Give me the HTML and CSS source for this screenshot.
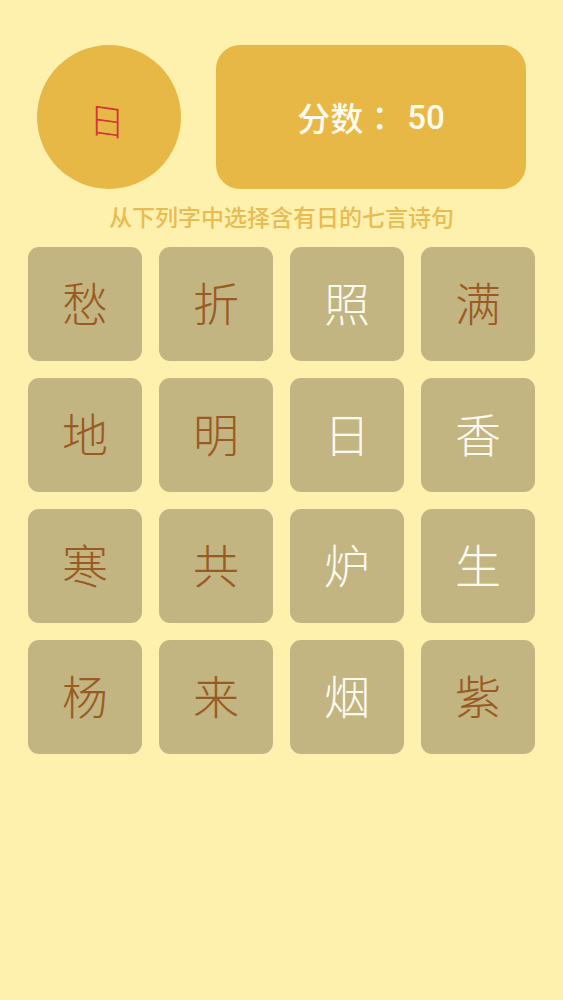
FILE: index.html
```html
<!DOCTYPE html>
<html lang="zh-CN">
<head>
    <meta charset="UTF-8">
    <meta name="viewport" content="width=device-width, initial-scale=1.0">
    <title>七言诗句</title>
    <link rel="stylesheet" href="styles.css">
</head>
<body>

<div class="container">
    <div class="topo">
        <div class="circulo"><span class="letra">日</span></div>
        <div class="placar"><span class="rotulo">分数</span><span class="dois-pontos">：</span>50</div>
    </div>
    <p class="dica">从下列字中选择含有日的七言诗句</p>
    <div class="grade">
        <div class="peca">愁</div>
        <div class="peca">折</div>
        <div class="peca branca">照</div>
        <div class="peca">满</div>
        <div class="peca">地</div>
        <div class="peca">明</div>
        <div class="peca branca">日</div>
        <div class="peca branca">香</div>
        <div class="peca">寒</div>
        <div class="peca">共</div>
        <div class="peca branca">炉</div>
        <div class="peca branca">生</div>
        <div class="peca">杨</div>
        <div class="peca">来</div>
        <div class="peca branca">烟</div>
        <div class="peca">紫</div>
    </div>
</div>

</body>
</html>
```

FILE: styles.css
```css
body {
    font-family: "Noto Sans CJK SC", "Noto Sans", sans-serif;
    margin: 0;
    background-color: #fef1ae;
    min-height: 100vh;
}

.container {
    display: flex;
    flex-direction: column;
    padding-top: 45px;
}

.topo {
    display: flex;
    gap: 35px;
    padding-left: 37px;
}

.circulo {
    width: 144px;
    height: 144px;
    border-radius: 50%;
    background-color: #e8b846;
    display: flex;
    justify-content: center;
    align-items: center;
}

.letra {
    color: #d3363a;
    font-size: 36px;
    font-weight: 300;
    transform: skewY(8deg) translate(-2px, 2px);
}

.placar {
    width: 310px;
    height: 144px;
    border-radius: 24px;
    background-color: #e8b846;
    color: #fffbf0;
    font-family: Roboto, "Noto Sans CJK SC", sans-serif;
    font-size: 33px;
    font-weight: 500;
    display: flex;
    justify-content: center;
    align-items: center;
}

.rotulo {
    font-family: "Noto Sans CJK SC", sans-serif;
}

.dois-pontos {
    font-family: "Noto Sans CJK TC", sans-serif;
    margin-right: 11px;
}

.dica {
    margin: 12px 0 0;
    text-align: center;
    font-size: 23px;
    font-weight: 500;
    line-height: 30px;
    color: #e9bb52;
}

.grade {
    display: grid;
    grid-template-columns: repeat(4, 114px);
    grid-auto-rows: 114px;
    gap: 17px;
    margin: 16px 0 0 28px;
}

.peca {
    background-color: #c2b582;
    border-radius: 11px;
    display: flex;
    justify-content: center;
    align-items: center;
    padding-bottom: 6px;
    font-size: 46px;
    font-weight: 300;
    color: #9a5b22;
}

.peca.branca {
    color: #fffaf0;
}
```
